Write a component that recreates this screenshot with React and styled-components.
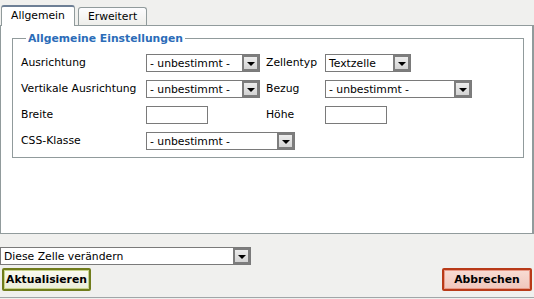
import React from 'react';
import styled, { createGlobalStyle } from 'styled-components';

const GlobalStyle = createGlobalStyle`
  html, body {
    margin: 0;
    padding: 0;
    background: #f0f0ee;
  }
  body {
    font-family: "DejaVu Sans", Verdana, sans-serif;
    font-size: 10.8px;
    color: #000;
  }
`;

const Page = styled.div`
  width: 534px;
  height: 298px;
  display: flex;
  flex-direction: column;
  box-sizing: border-box;
  border-bottom: 1px solid #a0a6a8;
`;

const TabRow = styled.div`
  display: flex;
  align-items: flex-end;
  gap: 3px;
  height: 25px;
  padding-left: 1px;
  box-sizing: border-box;
`;

const Tab = styled.div`
  box-sizing: border-box;
  height: ${p => (p.$active ? '21px' : '18px')};
  padding: 2px 9px 0;
  border: 1px solid #919b9c;
  border-bottom: none;
  border-radius: 3px 3px 0 0;
  background: ${p => (p.$active ? '#fff' : 'linear-gradient(#fcfcfe, #eeeeea)')};
  margin-bottom: ${p => (p.$active ? '-1px' : '0')};
  position: relative;
  z-index: 1;
  ${p => p.$active && 'border-top: 2px solid #6d7f95; padding-top: 2px;'}
`;

const Panel = styled.div`
  box-sizing: border-box;
  height: 209px;
  width: 534px;
  background: #fff;
  border: 1px solid #919b9c;
  border-right-width: 2px;
  padding: 6px 10px 0 11px;
`;

const Fieldset = styled.fieldset`
  margin: 0;
  box-sizing: border-box;
  width: 512px;
  height: 126px;
  border: 1px solid #919b9c;
  padding: 9px 0 0 8px;
`;

const Legend = styled.legend`
  color: #2b6cb8;
  font-weight: bold;
  padding: 0 2px;
  margin-left: 5px;
`;

const Grid = styled.div`
  display: grid;
  grid-template-columns: 125px 120px 59px auto;
  grid-auto-rows: 26px;
  align-items: start;
`;

const Label = styled.label`
  line-height: 18px;
  white-space: nowrap;
`;

const SelectBox = styled.div`
  box-sizing: border-box;
  width: ${p => p.$w}px;
  height: 18px;
  border: 1px solid #7a7a7a;
  background: #fff;
  display: flex;
  align-items: center;
  justify-content: space-between;
  padding-left: 3px;
  white-space: nowrap;
`;

const ArrowButton = styled.span`
  box-sizing: border-box;
  width: 17px;
  height: 16px;
  border: 2px solid #7d7d7d;
  background: linear-gradient(#ececec, #d4d4d4);
  display: flex;
  align-items: center;
  justify-content: center;
  margin-left: 2px;
  flex: none;

  &::after {
    content: '';
    border-left: 4px solid transparent;
    border-right: 4px solid transparent;
    border-top: 4px solid #000;
    margin-top: 1px;
  }
`;

const TextInput = styled.div`
  box-sizing: border-box;
  width: 62px;
  height: 18px;
  border: 1px solid #7a7a7a;
  background: #fff;
`;

const Spacer = styled.div``;

const Bottom = styled.div`
  display: flex;
  flex-direction: column;
  padding-top: 13px;
`;

const ButtonRow = styled.div`
  display: flex;
  justify-content: space-between;
  padding: 3px 2px 0 2px;
`;

const Button = styled.button`
  box-sizing: border-box;
  height: 23px;
  width: ${p => p.$w}px;
  font-family: "DejaVu Sans", Verdana, sans-serif;
  font-size: 10.8px;
  font-weight: bold;
  color: #000;
  border: 2px solid ${p => (p.$variant === 'cancel' ? '#b83a18' : '#707c1c')};
  border-radius: 2px;
  box-shadow: inset 0 0 0 1px ${p => (p.$variant === 'cancel' ? '#e89a88' : '#c8d48c')};
  background: ${p =>
    p.$variant === 'cancel'
      ? 'linear-gradient(#f8dcd4, #f0c6bc)'
      : 'linear-gradient(#fbfbf1, #eaecd8)'};
  padding: 0;
`;

function Select({ w, children }) {
  return (
    <SelectBox $w={w}>
      <span>{children}</span>
      <ArrowButton />
    </SelectBox>
  );
}

export default function App() {
  return (
    <>
      <GlobalStyle />
      <Page>
        <TabRow>
          <Tab $active>Allgemein</Tab>
          <Tab>Erweitert</Tab>
        </TabRow>
        <Panel>
          <Fieldset>
            <Legend>Allgemeine Einstellungen</Legend>
            <Grid>
              <Label>Ausrichtung</Label>
              <Select w={114}>- unbestimmt -</Select>
              <Label>Zellentyp</Label>
              <Select w={86}>Textzelle</Select>

              <Label>Vertikale Ausrichtung</Label>
              <Select w={114}>- unbestimmt -</Select>
              <Label>Bezug</Label>
              <Select w={147}>- unbestimmt -</Select>

              <Label>Breite</Label>
              <TextInput />
              <Label>Höhe</Label>
              <TextInput />

              <Label>CSS-Klasse</Label>
              <Select w={149}>- unbestimmt -</Select>
              <Spacer />
              <Spacer />
            </Grid>
          </Fieldset>
        </Panel>
        <Bottom>
          <Select w={251}>Diese Zelle verändern</Select>
          <ButtonRow>
            <Button $w={89}>Aktualisieren</Button>
            <Button $w={90} $variant="cancel">Abbrechen</Button>
          </ButtonRow>
        </Bottom>
      </Page>
    </>
  );
}
